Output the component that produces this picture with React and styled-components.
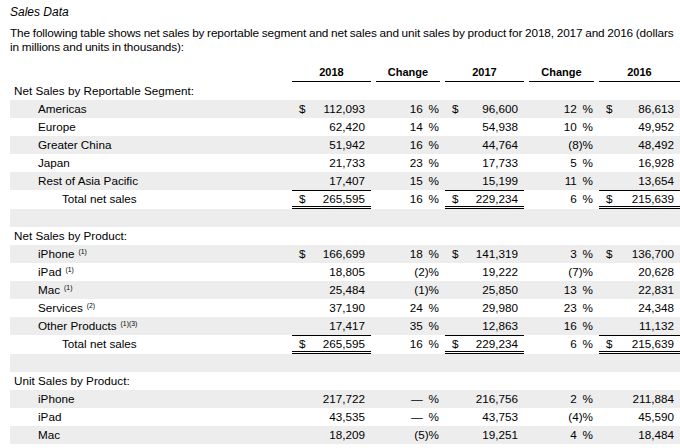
import styled, { createGlobalStyle } from "styled-components";

const GlobalStyle = createGlobalStyle`
  body {
    margin: 0;
    background: #fff;
    color: #000;
    font-family: "Liberation Sans", Arial, sans-serif;
  }
`;

const Page = styled.div`
  width: 680px;
  padding-left: 10px;
  box-sizing: border-box;
`;

const Title = styled.h2`
  margin: 0;
  padding-top: 5px;
  font-size: 12px;
  line-height: 15px;
  font-style: italic;
  font-weight: normal;
`;

const Intro = styled.p`
  margin: 7px 0 0 0;
  font-size: 11.8px;
  letter-spacing: -0.12px;
  word-spacing: -0.4px;
  line-height: 13.5px;
  padding-right: 2px;
`;

const COLS = "277px 79px 64px 79px 65px 81px";

const HeadRow = styled.div`
  display: grid;
  grid-template-columns: ${COLS};
  column-gap: 5px;
  height: 28px;
  align-items: end;
`;

const HeadCell = styled.div`
  font-size: 11px;
  font-weight: bold;
  text-align: center;
  line-height: 14px;
  padding-bottom: 2px;
  border-bottom: ${({ $line }) => ($line ? "1px solid #000" : "none")};
`;

const Row = styled.div`
  display: grid;
  grid-template-columns: ${COLS};
  column-gap: 5px;
  height: ${({ $total }) => ($total ? "19px" : "18px")};
  background: ${({ $shade }) => ($shade ? "#ededed" : "#fff")};
  font-size: 11.7px;
  line-height: 18px;
`;

const Label = styled.div`
  padding-left: ${({ $indent }) => $indent}px;
  white-space: nowrap;
`;

const Note = styled.sup`
  font-size: 6.8px;
  vertical-align: 4px;
  line-height: 0;
  margin-left: 4px;
`;

const Amount = styled.div`
  display: flex;
  justify-content: space-between;
  padding: 0 6px 0 7px;
  box-sizing: border-box;
  ${({ $total }) =>
    $total &&
    `
    border-top: 1px solid #000;
    border-bottom: 3px double #000;
    line-height: 15px;
  `}
`;

const Change = styled.div`
  text-align: right;
  padding-right: 1px;
  white-space: nowrap;
`;

const segments = [
  ["Americas", ["112,093", "16\u2002%", "96,600", "12\u2002%", "86,613"], true],
  ["Europe", ["62,420", "14\u2002%", "54,938", "10\u2002%", "49,952"]],
  ["Greater China", ["51,942", "16\u2002%", "44,764", "(8)%", "48,492"]],
  ["Japan", ["21,733", "23\u2002%", "17,733", "5\u2002%", "16,928"]],
  ["Rest of Asia Pacific", ["17,407", "15\u2002%", "15,199", "11\u2002%", "13,654"]],
];

const products = [
  ["iPhone", "(1)", ["166,699", "18\u2002%", "141,319", "3\u2002%", "136,700"], true],
  ["iPad", "(1)", ["18,805", "(2)%", "19,222", "(7)%", "20,628"]],
  ["Mac", "(1)", ["25,484", "(1)%", "25,850", "13\u2002%", "22,831"]],
  ["Services", "(2)", ["37,190", "24\u2002%", "29,980", "23\u2002%", "24,348"]],
  ["Other Products", "(1)(3)", ["17,417", "35\u2002%", "12,863", "16\u2002%", "11,132"]],
];

const units = [
  ["iPhone", ["217,722", "—\u2002%", "216,756", "2\u2002%", "211,884"]],
  ["iPad", ["43,535", "—\u2002%", "43,753", "(4)%", "45,590"]],
  ["Mac", ["18,209", "(5)%", "19,251", "4\u2002%", "18,484"]],
];

const total = ["265,595", "16\u2002%", "229,234", "6\u2002%", "215,639"];

function Cells({ values, dollar, isTotal }) {
  return values.map((v, i) =>
    i % 2 === 0 ? (
      <Amount key={i} $total={isTotal}>
        <span>{dollar ? "$" : ""}</span>
        <span>{v}</span>
      </Amount>
    ) : (
      <Change key={i}>{v}</Change>
    )
  );
}

export default function App() {
  let n = 0;
  const shade = () => n++ % 2 === 1;

  const rows = [];
  const heading = (text) =>
    rows.push(
      <Row key={"h" + text} $shade={shade()}>
        <Label $indent={4}>{text}</Label>
      </Row>
    );
  const spacer = (k) => rows.push(<Row key={k} $shade={shade()} />);
  const totalRow = (k) =>
    rows.push(
      <Row key={k} $shade={shade()} $total>
        <Label $indent={52}>Total net sales</Label>
        <Cells values={total} dollar isTotal />
      </Row>
    );

  heading("Net Sales by Reportable Segment:");
  segments.forEach(([name, vals, dollar]) =>
    rows.push(
      <Row key={"s" + name} $shade={shade()}>
        <Label $indent={28}>{name}</Label>
        <Cells values={vals} dollar={dollar} />
      </Row>
    )
  );
  totalRow("t1");
  spacer("sp1");

  heading("Net Sales by Product:");
  products.forEach(([name, note, vals, dollar]) =>
    rows.push(
      <Row key={"p" + name} $shade={shade()}>
        <Label $indent={28}>
          {name}
          <Note>{note}</Note>
        </Label>
        <Cells values={vals} dollar={dollar} />
      </Row>
    )
  );
  totalRow("t2");
  spacer("sp2");

  heading("Unit Sales by Product:");
  units.forEach(([name, vals]) =>
    rows.push(
      <Row key={"u" + name} $shade={shade()}>
        <Label $indent={28}>{name}</Label>
        <Cells values={vals} />
      </Row>
    )
  );

  return (
    <Page>
      <GlobalStyle />
      <Title>Sales Data</Title>
      <Intro>
        The following table shows net sales by reportable segment and net sales
        and unit sales by product for 2018, 2017 and 2016 (dollars in millions
        and units in thousands):
      </Intro>
      <HeadRow>
        <div />
        <HeadCell $line>2018</HeadCell>
        <HeadCell $line>Change</HeadCell>
        <HeadCell $line>2017</HeadCell>
        <HeadCell $line>Change</HeadCell>
        <HeadCell $line>2016</HeadCell>
      </HeadRow>
      {rows}
    </Page>
  );
}
